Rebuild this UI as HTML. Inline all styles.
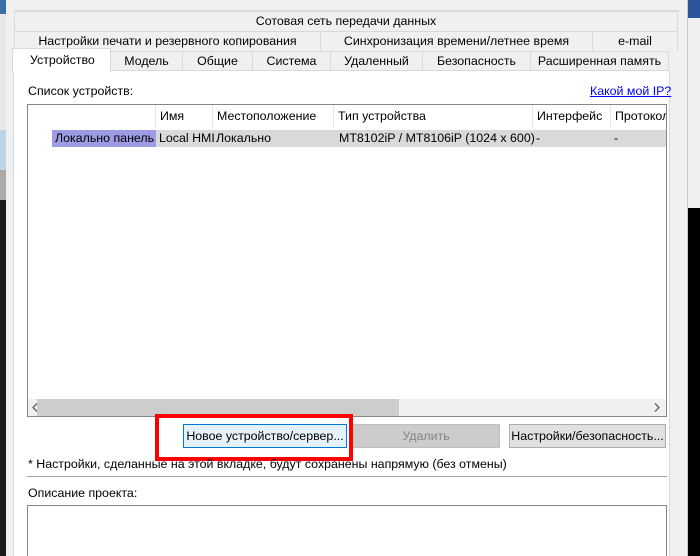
<!DOCTYPE html>
<html><head><meta charset="utf-8"><style>
*{margin:0;padding:0;box-sizing:border-box}
html,body{width:700px;height:556px;overflow:hidden}
body{position:relative;background:#f0f0f0;font-family:"Liberation Sans","DejaVu Sans",sans-serif;font-size:12.4px;color:#000}
.a{position:absolute}
.tab{position:absolute;background:#f0f0f0;border:1px solid #d9d9d9;border-bottom:none;text-align:center;line-height:19px;height:20px;white-space:nowrap}
.c{position:absolute;top:0;height:23px;line-height:23px;padding-left:4px;border-right:1px solid #e5e5e5;white-space:nowrap;overflow:hidden}
.r{position:absolute;top:0;height:17px;line-height:17px;padding-left:3px;white-space:nowrap;overflow:hidden}
.btn{position:absolute;height:24px;line-height:22px;text-align:center;border:1px solid #adadad;background:#e1e1e1;white-space:nowrap}
</style></head><body>
<div class="a" style="left:0;top:0;width:6px;height:556px;background:#1a1a1a"></div>
<div class="a" style="left:0;top:0;width:6px;height:130px;background:#e8e8e8"></div>
<div class="a" style="left:0;top:0;width:6px;height:14px;background:#3a6ea5"></div>
<div class="a" style="left:0;top:130px;width:6px;height:40px;background:#bcd4e6"></div>
<div class="a" style="left:0;top:170px;width:6px;height:30px;background:#aaa"></div>
<div class="a" style="left:688px;top:0;width:12px;height:556px;background:#000"></div>
<div class="a" style="left:688px;top:0;width:12px;height:18px;background:#2b579a"></div>
<div class="a" style="left:688px;top:18px;width:12px;height:190px;background:#f0f0f0"></div>
<div class="a" style="left:687px;top:0;width:1px;height:556px;background:#ccc"></div>
<div class="a" style="left:6px;top:0;width:681px;height:556px;background:#f0f0f0"></div>
<div class="a" style="left:14px;top:10px;width:666px;height:1px;background:#dcdcdc"></div>
<div class="tab" style="left:14px;top:11px;width:664px;">Сотовая сеть передачи данных</div>
<div class="tab" style="left:14px;top:31px;width:307px;">Настройки печати и резервного копирования</div>
<div class="tab" style="left:320px;top:31px;width:273px;">Синхронизация времени/летнее время</div>
<div class="tab" style="left:592px;top:31px;width:86px;">e-mail</div>
<div class="tab" style="left:110px;top:51px;width:73px;">Модель</div>
<div class="tab" style="left:182px;top:51px;width:71px;">Общие</div>
<div class="tab" style="left:252px;top:51px;width:79px;">Система</div>
<div class="tab" style="left:330px;top:51px;width:93px;">Удаленный</div>
<div class="tab" style="left:422px;top:51px;width:109px;">Безопасность</div>
<div class="tab" style="left:530px;top:51px;width:139px;">Расширенная память</div>
<div class="a" style="left:13px;top:70px;width:657px;height:490px;background:#fff;border:1px solid #d9d9d9"></div>
<div class="tab" style="left:12px;top:48px;width:99px;height:24px;background:#fff;line-height:23px;text-align:left;padding-left:17px;border-color:#d9d9d9">Устройство</div>
<div class="a" style="left:28px;top:84px;">Список устройств:</div>
<div class="a" style="left:590px;top:84px;color:#0000ee;text-decoration:underline">Какой мой IP?</div>
<div class="a" style="left:27px;top:104px;width:640px;height:313px;border:1px solid #828790;background:#fff;overflow:hidden">
 <div class="a" style="left:0;top:0;width:640px;height:24px">
  <div class="c" style="left:0;width:128px"></div>
  <div class="c" style="left:128px;width:57px">Имя</div>
  <div class="c" style="left:185px;width:121px">Местоположение</div>
  <div class="c" style="left:306px;width:199px">Тип устройства</div>
  <div class="c" style="left:505px;width:78px">Интерфейс</div>
  <div class="c" style="left:583px;width:60px;border:none">Протокол</div>
 </div>
 <div class="a" style="left:24px;top:25px;width:616px;height:17px;background:#d9d9d9">
  <div class="r" style="left:0;width:104px;background:#9d9be4">Локально панель</div>
  <div class="r" style="left:104px">Local HMI</div>
  <div class="r" style="left:161px">Локально</div>
  <div class="r" style="left:284px">MT8102iP / MT8106iP (1024 x 600)</div>
  <div class="r" style="left:481px">-</div>
  <div class="r" style="left:559px">-</div>
 </div>
 <div class="a" style="left:0;top:294px;width:638px;height:17px;background:#f0f0f0"></div>
 <div class="a" style="left:9px;top:294px;width:362px;height:17px;background:#cdcdcd"></div>
 <svg class="a" style="left:3px;top:297px" width="8" height="11"><path d="M6 1.5L2 5.5L6 9.5" stroke="#606060" stroke-width="1.3" fill="none"/></svg>
 <svg class="a" style="left:625px;top:297px" width="8" height="11"><path d="M2 1.5L6 5.5L2 9.5" stroke="#606060" stroke-width="1.3" fill="none"/></svg>
</div>
<div class="btn" style="left:183px;top:424px;width:164px;background:#e5f1fb;border-color:#0078d7">Новое устройство/сервер...</div>
<div class="btn" style="left:352px;top:424px;width:148px;background:#cccccc;border-color:#bfbfbf;color:#838383">Удалить</div>
<div class="btn" style="left:509px;top:424px;width:157px">Настройки/безопасность...</div>
<div class="a" style="left:155px;top:414px;width:198px;height:47px;border:4px solid #ff0000"></div>
<div class="a" style="left:28px;top:457px;">* Настройки, сделанные на этой вкладке, будут сохранены напрямую (без отмены)</div>
<div class="a" style="left:27px;top:476px;width:640px;height:1px;background:#a0a0a0"></div>
<div class="a" style="left:28px;top:486px;">Описание проекта:</div>
<div class="a" style="left:27px;top:505px;width:640px;height:60px;border:1px solid #828790;background:#fff"></div>
</body></html>
